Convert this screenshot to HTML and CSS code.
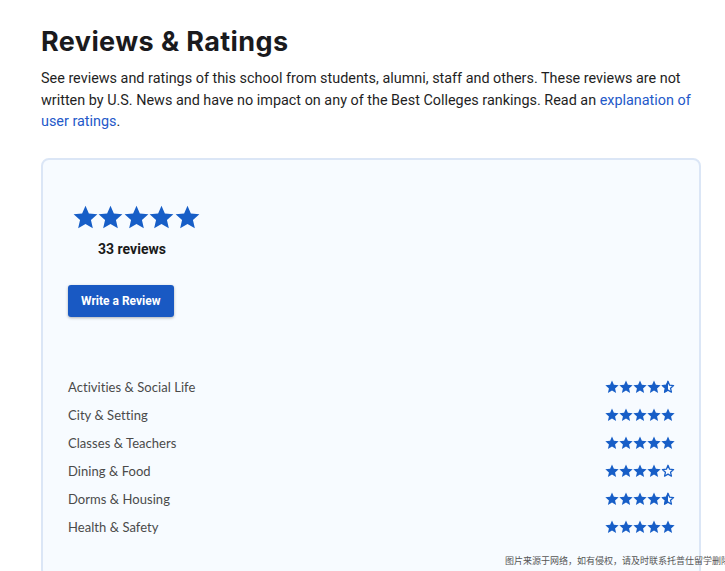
FILE: index.html
```html
<!DOCTYPE html>
<html lang="en">
<head>
<meta charset="utf-8">
<link rel="stylesheet" href="styles.css">
</head>
<body>
<svg class="defs" width="0" height="0" aria-hidden="true">
  <defs>
    <symbol id="star" viewBox="0 0 24 24">
      <polygon points="12,0.7 15.23,8.25 23.41,8.99 17.23,14.40 19.05,22.41 12,18.2 4.95,22.41 6.77,14.40 0.59,8.99 8.77,8.25"/>
    </symbol>
    <clipPath id="lefthalf"><rect x="0" y="0" width="12" height="24"/></clipPath>
    <symbol id="star-half" viewBox="0 0 24 24">
      <polygon class="outline" points="12,2.2 14.7,8.9 21.6,9.6 16.4,14.2 17.9,20.9 12,17.4 6.1,20.9 7.6,14.2 2.4,9.6 9.3,8.9"/>
      <polygon clip-path="url(#lefthalf)" points="12,0.7 15.23,8.25 23.41,8.99 17.23,14.40 19.05,22.41 12,18.2 4.95,22.41 6.77,14.40 0.59,8.99 8.77,8.25"/>
    </symbol>
    <symbol id="star-empty" viewBox="0 0 24 24">
      <polygon class="outline" points="12,2.2 14.7,8.9 21.6,9.6 16.4,14.2 17.9,20.9 12,17.4 6.1,20.9 7.6,14.2 2.4,9.6 9.3,8.9"/>
    </symbol>
  </defs>
</svg>

<main class="page">
  <h1 class="title">Reviews &amp; Ratings</h1>
  <p class="intro">See reviews and ratings of this school from students, alumni, staff and others. These reviews are not written by U.S. News and have no impact on any of the Best Colleges rankings. Read an <a href="#" class="link">explanation of user ratings</a>.</p>

  <section class="card">
    <div class="summary">
      <div class="big-stars">
        <svg class="bstar"><use href="#star"/></svg>
        <svg class="bstar"><use href="#star"/></svg>
        <svg class="bstar"><use href="#star"/></svg>
        <svg class="bstar"><use href="#star"/></svg>
        <svg class="bstar"><use href="#star"/></svg>
      </div>
      <div class="count">33 reviews</div>
    </div>
    <button class="btn">Write a Review</button>

    <ul class="ratings">
      <li class="row"><span class="label">Activities &amp; Social Life</span>
        <span class="stars"><svg class="sstar"><use href="#star"/></svg><svg class="sstar"><use href="#star"/></svg><svg class="sstar"><use href="#star"/></svg><svg class="sstar"><use href="#star"/></svg><svg class="sstar"><use href="#star-half"/></svg></span></li>
      <li class="row"><span class="label">City &amp; Setting</span>
        <span class="stars"><svg class="sstar"><use href="#star"/></svg><svg class="sstar"><use href="#star"/></svg><svg class="sstar"><use href="#star"/></svg><svg class="sstar"><use href="#star"/></svg><svg class="sstar"><use href="#star"/></svg></span></li>
      <li class="row"><span class="label">Classes &amp; Teachers</span>
        <span class="stars"><svg class="sstar"><use href="#star"/></svg><svg class="sstar"><use href="#star"/></svg><svg class="sstar"><use href="#star"/></svg><svg class="sstar"><use href="#star"/></svg><svg class="sstar"><use href="#star"/></svg></span></li>
      <li class="row"><span class="label">Dining &amp; Food</span>
        <span class="stars"><svg class="sstar"><use href="#star"/></svg><svg class="sstar"><use href="#star"/></svg><svg class="sstar"><use href="#star"/></svg><svg class="sstar"><use href="#star"/></svg><svg class="sstar"><use href="#star-empty"/></svg></span></li>
      <li class="row"><span class="label">Dorms &amp; Housing</span>
        <span class="stars"><svg class="sstar"><use href="#star"/></svg><svg class="sstar"><use href="#star"/></svg><svg class="sstar"><use href="#star"/></svg><svg class="sstar"><use href="#star"/></svg><svg class="sstar"><use href="#star-half"/></svg></span></li>
      <li class="row"><span class="label">Health &amp; Safety</span>
        <span class="stars"><svg class="sstar"><use href="#star"/></svg><svg class="sstar"><use href="#star"/></svg><svg class="sstar"><use href="#star"/></svg><svg class="sstar"><use href="#star"/></svg><svg class="sstar"><use href="#star"/></svg></span></li>
    </ul>
  </section>
</main>
<div class="watermark">图片来源于网络，如有侵权，请及时联系托普仕留学删除</div>
</body>
</html>
```
FILE: styles.css
```css
html, body {
  margin: 0;
  padding: 0;
  background: #ffffff;
  overflow: hidden;
}
.defs {
  position: absolute;
  width: 0;
  height: 0;
}
.page {
  padding: 26px 24px 0 41px;
  font-family: Roboto, "Liberation Sans", sans-serif;
}
.title {
  margin: 0;
  font-family: Inter, "Liberation Sans", sans-serif;
  font-weight: 700;
  font-size: 27px;
  line-height: 32px;
  color: #1a1a1d;
  letter-spacing: 0.4px;
}
.intro {
  margin: 10px 0 0;
  font-size: 14.4px;
  line-height: 21.5px;
  color: #1f1f1f;
  width: 660px;
}
.link {
  color: #2459c9;
  text-decoration: none;
}
.card {
  margin-top: 25px;
  width: 660px;
  height: 420px;
  border: 2px solid #dbe6f6;
  border-radius: 8px;
  background: #f7fbff;
  padding: 45px 0 0 25px;
  box-sizing: border-box;
}
.summary {
  display: flex;
  flex-direction: column;
  align-items: center;
  width: 128px;
  margin-left: 4px;
}
.big-stars {
  display: flex;
  gap: 0.5px;
}
.bstar {
  width: 25px;
  height: 25px;
  fill: #175ec7;
}
.count {
  margin-top: 11px;
  margin-right: 8px;
  font-weight: 700;
  font-size: 14px;
  color: #1a1a1a;
}
.btn {
  margin-top: 28px;
  display: block;
  height: 32px;
  padding: 0 13px;
  border: none;
  border-radius: 3px;
  background: #1959c3;
  color: #ffffff;
  font-family: Roboto, "Liberation Sans", sans-serif;
  font-weight: 700;
  font-size: 12px;
  box-shadow: 0 1px 3px rgba(0,0,0,0.3);
}
.ratings {
  list-style: none;
  margin: 56px 0 0;
  padding: 0;
  width: 607px;
}
.row {
  display: flex;
  justify-content: space-between;
  align-items: center;
  height: 28px;
}
.label {
  font-family: Lato, "Liberation Sans", sans-serif;
  font-size: 13px;
  color: #4a4a4a;
  letter-spacing: 0.05px;
}
.stars {
  display: flex;
}
.sstar {
  width: 14px;
  height: 14px;
  fill: #175ec7;
}
.outline {
  fill: none;
  stroke: #175ec7;
  stroke-width: 2.2;
  stroke-linejoin: round;
}
.watermark {
  position: absolute;
  left: 505px;
  top: 554px;
  font-family: "Noto Sans CJK SC", sans-serif;
  font-size: 9px;
  color: #555555;
  white-space: nowrap;
}
```
